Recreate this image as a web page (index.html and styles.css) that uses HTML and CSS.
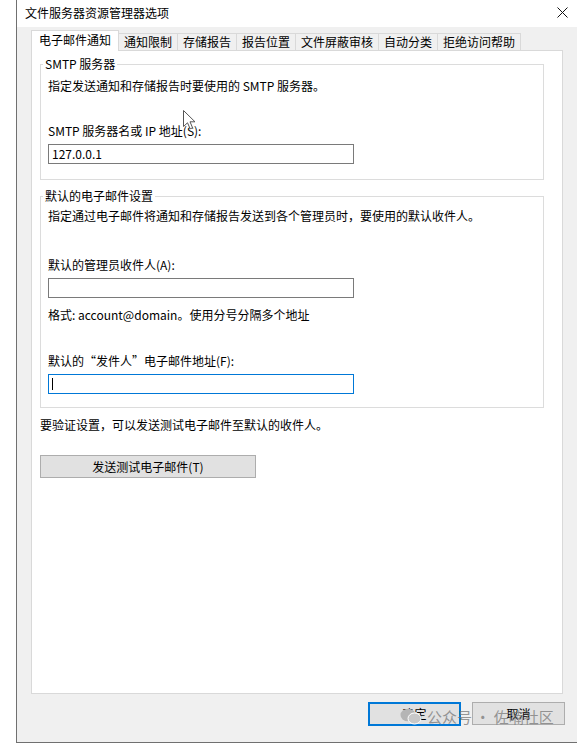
FILE: index.html
```html
<!DOCTYPE html>
<html lang="zh-CN">
<head>
    <meta charset="UTF-8">
    <title>文件服务器资源管理器选项</title>
    <link rel="stylesheet" href="styles.css">
</head>
<body>
    <div class="window">
        <div class="titlebar">
            <span class="title">文件服务器资源管理器选项</span>
            <svg class="close" width="11" height="11" viewBox="0 0 11 11">
                <path d="M0.5 0.5 L10.5 10.5 M10.5 0.5 L0.5 10.5" stroke="#111" stroke-width="1" fill="none"/>
            </svg>
        </div>

        <div class="tabs">
            <div class="tab active">电子邮件通知</div>
            <div class="tab">通知限制</div>
            <div class="tab">存储报告</div>
            <div class="tab">报告位置</div>
            <div class="tab">文件屏蔽审核</div>
            <div class="tab">自动分类</div>
            <div class="tab">拒绝访问帮助</div>
        </div>

        <div class="panel">
            <fieldset class="group group-smtp">
                <legend>SMTP 服务器</legend>
                <p class="desc">指定发送通知和存储报告时要使用的 SMTP 服务器。</p>
                <p class="label label-first">SMTP 服务器名或 IP 地址(S):</p>
                <div class="field">127.0.0.1</div>
            </fieldset>

            <fieldset class="group group-mail">
                <legend>默认的电子邮件设置</legend>
                <p class="desc">指定通过电子邮件将通知和存储报告发送到各个管理员时，要使用的默认收件人。</p>
                <p class="label label-first">默认的管理员收件人(A):</p>
                <div class="field"></div>
                <p class="note">格式: account@domain。使用分号分隔多个地址</p>
                <p class="label">默认的“发件人”电子邮件地址(F):</p>
                <div class="field focused"><span class="caret"></span></div>
            </fieldset>

            <p class="hint">要验证设置，可以发送测试电子邮件至默认的收件人。</p>
            <button class="btn test-btn">发送测试电子邮件(T)</button>
        </div>

        <div class="footer">
            <button class="btn btn-ok">确定</button>
            <button class="btn btn-cancel">取消</button>
        </div>

        <!-- 水印 -->
        <div class="watermark">
            <svg width="22" height="17" viewBox="0 0 22 17">
                <ellipse cx="8" cy="7" rx="7.5" ry="6.3" fill="#b5b5b5"/>
                <ellipse cx="14.5" cy="10.5" rx="6.5" ry="5.5" fill="#c8c8c8" stroke="#fff" stroke-width="1"/>
            </svg>
            <span>公众号 · 佐喃社区</span>
        </div>

        <!-- 鼠标指针 -->
        <svg class="cursor" width="13" height="20" viewBox="0 0 13 20">
            <path d="M0.5 0.5 L0.5 16.5 L4.5 12.8 L7.2 18.8 L9.6 17.8 L7 11.8 L12 11.8 Z" fill="#fff" stroke="#555" stroke-width="1" stroke-linejoin="round"/>
        </svg>
    </div>
</body>
</html>
```

FILE: styles.css
```css
body {
    margin: 0;
    background-color: #ffffff;
    font-family: "Noto Sans CJK SC", "Liberation Sans", sans-serif;
    font-size: 12px;
    color: #000;
}

.window {
    position: relative;
    margin-left: 16px;
    width: 561px;
    height: 743px;
    box-sizing: border-box;
    border-left: 1px solid #707070;
    border-bottom: 1px solid #707070;
    background-color: #f0f0f0;
}

.titlebar {
    height: 27px;
    background: #ffffff;
    display: flex;
    align-items: center;
    justify-content: space-between;
    padding: 0 9px 2px 8px;
    box-sizing: border-box;
}

.title {
    line-height: 16px;
}

.tabs {
    display: flex;
    align-items: flex-end;
    height: 20px;
    margin: 3px 0 0 14px;
}

.tab {
    height: 17px;
    line-height: 16px;
    padding: 0 5px;
    box-sizing: border-box;
    border: 1px solid #d9d9d9;
    border-bottom: none;
    margin-left: -1px;
    background: #f0f0f0;
    white-space: nowrap;
}

.tab.active {
    position: relative;
    z-index: 1;
    height: 21px;
    line-height: 18px;
    margin: 0 0 -1px 0;
    padding: 0 7px;
    background: #ffffff;
}

.panel {
    margin: 0 14px;
    height: 644px;
    box-sizing: border-box;
    background: #ffffff;
    border: 1px solid #d9d9d9;
    padding: 5px 18px 0 8px;
}

.group {
    margin: 0;
    padding: 0 7px 15px 7px;
    border: 1px solid #dcdcdc;
}

.group legend {
    padding: 0 2px;
    margin-left: -5px;
    line-height: 16px;
}

.group-mail {
    margin-top: 8px;
    padding-bottom: 13px;
}

.group p {
    margin: 0;
    line-height: 16px;
}

.group-smtp .desc {
    margin-top: 6px;
}

.group-mail .desc {
    margin-top: 4px;
}

.group .label-first {
    margin-top: 29px;
    margin-bottom: 5px;
}

.group-mail .label-first {
    margin-top: 33px;
    margin-bottom: 4px;
}

.group .note {
    margin-top: 9px;
}

.group .label {
    margin-bottom: 5px;
}

.group-mail .note + .label {
    margin-top: 30px;
}

.field {
    width: 306px;
    height: 20px;
    box-sizing: border-box;
    border: 1px solid #7a7a7a;
    padding: 0 3px;
    line-height: 18px;
    background: #fff;
}

.field.focused {
    border-color: #0078d7;
    display: flex;
    align-items: center;
}

.caret {
    width: 1px;
    height: 12px;
    background: #000;
}

.hint {
    margin: 9px 0 0 0;
    line-height: 16px;
}

.btn {
    font-family: inherit;
    font-size: 12px;
    color: #000;
    background: #e1e1e1;
    border: 1px solid #adadad;
    padding: 0;
    line-height: 16px;
}

.test-btn {
    margin-top: 22px;
    width: 216px;
    height: 23px;
}

.footer {
    display: flex;
    justify-content: flex-end;
    align-items: flex-start;
    gap: 11px;
    margin-top: 8px;
    padding-right: 12px;
}

.btn-ok {
    width: 93px;
    height: 24px;
    border: 2px solid #0078d7;
}

.btn-cancel {
    width: 93px;
    height: 23px;
}

.watermark {
    position: absolute;
    left: 383px;
    top: 706px;
    display: flex;
    align-items: center;
    gap: 5px;
    color: rgba(120, 120, 120, 0.75);
    font-size: 15px;
}

.cursor {
    position: absolute;
    left: 166px;
    top: 110px;
}
```
